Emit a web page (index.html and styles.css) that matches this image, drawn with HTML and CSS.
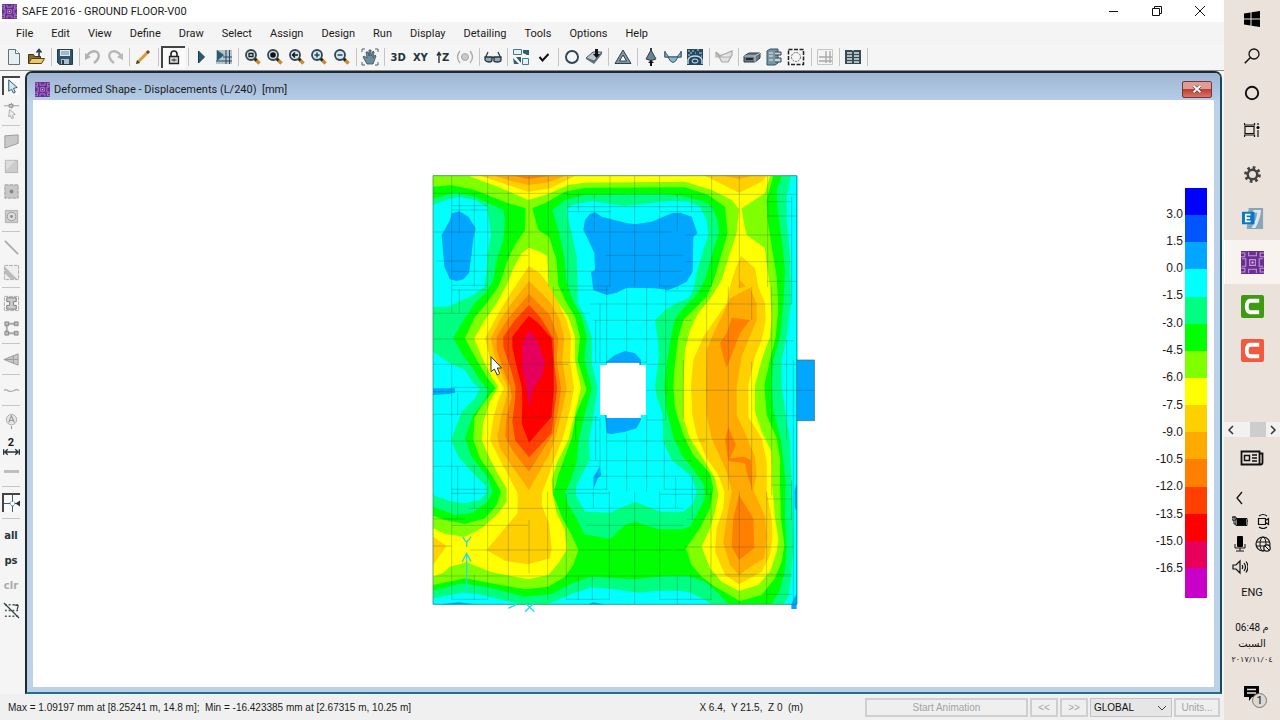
FILE: index.html
```html
<!DOCTYPE html>
<html lang="en">
<head>
<meta charset="utf-8">
<title>SAFE 2016 - GROUND FLOOR-V00</title>
<link rel="stylesheet" href="styles.css">
</head>
<body>
<svg class="defs" aria-hidden="true">
  <symbol id="safe" viewBox="0 0 24 24"><rect width="24" height="24" fill="#6a2e91"/><path d="M0 2h4v4H0M8 1v4h8V1M24 2h-4v4h4M1 8h4v8H1M9 9h6v6H9zM23 8h-4v8h4M0 22h4v-4H0M8 23v-4h8v4M24 22h-4v-4h4" fill="none" stroke="#c398dc" stroke-width="1.100"/><path d="M11 11h2v2h-2z" fill="#e6d0f4"/></symbol>
  <symbol id="lens" viewBox="0 0 18 18"><path d="M10.500 10.500l5 5" stroke="#c98a2c" stroke-width="3.400"/><path d="M10 10l2.500 2.500" stroke="#222" stroke-width="2.600"/><circle cx="7" cy="7" r="5" fill="#d3e4ec" stroke="#34464f" stroke-width="1.800"/></symbol>
</svg>
<div class="desktop">
<div class="app">
  <header class="titlebar">
    <svg class="logo" viewBox="0 0 24 24"><use href="#safe"/></svg>
    <h1 class="title">SAFE 2016 - GROUND FLOOR-V00</h1>
    <div class="winbtns">
      <button aria-label="Minimize"><svg viewBox="0 0 12 12"><path d="M1 6.500h9" stroke="#111"/></svg></button>
      <button aria-label="Restore"><svg viewBox="0 0 12 12"><path d="M1.500 3.500h7v7h-7zM3.500 3.500v-2h7v7h-2" fill="none" stroke="#111"/></svg></button>
      <button aria-label="Close"><svg viewBox="0 0 12 12"><path d="M1 1l10 10M11 1L1 11" stroke="#111"/></svg></button>
    </div>
  </header>
  <nav class="menu" aria-label="Main menu">
    <button>File</button><button>Edit</button><button>View</button><button>Define</button><button>Draw</button><button>Select</button><button>Assign</button><button>Design</button><button>Run</button><button>Display</button><button>Detailing</button><button>Tools</button><button>Options</button><button>Help</button>
  </nav>
  <div class="toolbar" role="toolbar" aria-label="Main tools">
    <button aria-label="New"><svg viewBox="0 0 18 18"><path d="M3.500 1.500h7l4 4v11h-11z" fill="#e6eff1" stroke="#62737a"/><path d="M10.500 1.500v4h4" fill="#fff" stroke="#62737a"/></svg></button>
    <button aria-label="Open"><svg viewBox="0 0 18 18"><path d="M1.500 15.500v-9h5l1 2h6v7z" fill="#8a6a24" stroke="#43351a"/><path d="M1.500 15.500l3-5h13l-3 5z" fill="#f1c869" stroke="#5a4319"/><path d="M12 9V3M9.500 4.500L12 1.500l2.500 3" fill="none" stroke="#263b49" stroke-width="1.600"/></svg></button>
    <i class="sep"></i>
    <button aria-label="Save"><svg viewBox="0 0 18 18"><path d="M1.500 1.500h15v15h-13l-2-2z" fill="#31546b" stroke="#263d4b"/><path d="M4 2h10v6H4z" fill="#dce8ee"/><path d="M5 4h8M5 6h8" stroke="#6a8798"/><path d="M5 11h8v5H5z" fill="#a8c1cd"/><path d="M6 12h2v4H6z" fill="#263d4b"/></svg></button>
    <i class="sep"></i>
    <button disabled aria-label="Undo"><svg viewBox="0 0 18 18"><path d="M3 8c3-5 8-6 11-3 2 4 0 7-4 10" fill="none" stroke="#b2b2b2" stroke-width="2.400"/><path d="M1 5v7l6-3z" fill="#b2b2b2"/></svg></button>
    <button disabled aria-label="Redo"><svg viewBox="0 0 18 18"><path d="M15 8C12 3 7 2 4 5c-2 4 0 7 4 10" fill="none" stroke="#b8b8b8" stroke-width="2.400"/><path d="M17 5v7l-6-3z" fill="#b8b8b8"/></svg></button>
    <i class="sep"></i>
    <button aria-label="Edit"><svg viewBox="0 0 18 18"><path d="M4 14L14 4" stroke="#d79a35" stroke-width="3"/><path d="M13 5l2-2" stroke="#8a3c22" stroke-width="3"/><path d="M2 16l1-4 3 3z" fill="#40331e"/></svg></button>
    <i class="sep"></i>
    <button class="pressed" aria-label="Lock"><svg viewBox="0 0 18 18"><path d="M6 8V5a3 3 0 016 0V8" fill="none" stroke="#222" stroke-width="1.600"/><path d="M4.500 7.500h9v7h-9z" fill="#d5d9dd" stroke="#222" stroke-width="1.300"/><path d="M9 9.500v3M6.500 11h5" stroke="#333"/></svg></button>
    <i class="sep"></i>
    <button aria-label="Run"><svg viewBox="0 0 18 18"><path d="M5.500 3l6 6-6 6z" fill="#285c76" stroke="#183d50"/></svg></button>
    <button aria-label="Run with mesh"><svg viewBox="0 0 18 18"><path d="M1 2h16v14H1z" fill="#b5c4cc"/><path d="M11 2v14M14.500 2v14M1 13h16M8 9h9" stroke="#2d4b5c"/><path d="M2 2l7 5-7 6z" fill="#285c76"/></svg></button>
    <i class="sep"></i>
    <button aria-label="Zoom window"><svg viewBox="0 0 18 18"><use href="#lens"/><path d="M5 5.500h4v3H5z" fill="none" stroke="#222" stroke-width="1.300"/></svg></button>
    <button aria-label="Zoom full"><svg viewBox="0 0 18 18"><use href="#lens"/><circle cx="7" cy="7" r="2.800" fill="#111"/></svg></button>
    <button aria-label="Zoom previous"><svg viewBox="0 0 18 18"><use href="#lens"/><path d="M10 7H5M7 4.500L4.500 7 7 9.500" fill="none" stroke="#111" stroke-width="1.400"/></svg></button>
    <button aria-label="Zoom in"><svg viewBox="0 0 18 18"><use href="#lens"/><path d="M4.500 7h5M7 4.500v5" stroke="#194b66" stroke-width="1.500"/></svg></button>
    <button aria-label="Zoom out"><svg viewBox="0 0 18 18"><use href="#lens"/><path d="M4.500 7h5" stroke="#194b66" stroke-width="1.500"/></svg></button>
    <i class="sep"></i>
    <button aria-label="Pan"><svg viewBox="0 0 18 18"><path d="M1 4V1h3M14 1h3v3M1 14v3h3M14 17h3v-3" fill="none" stroke="#44616f"/><path d="M6 16L2 9l1-1 3 2-1-6h2l1 4V2h2v6l2-5 1 1-1 6 2-3 1 1-3 8z" fill="#6f8c9b" stroke="#38515f" stroke-width=".8"/></svg></button>
    <i class="sep"></i>
    <button class="letters">3D</button>
    <button class="letters">XY</button>
    <button class="letters" aria-label="Elevation Z"><svg class="up" viewBox="0 0 6 12"><path d="M3 12V2M1 4.500L3 1.500l2 3" fill="none" stroke="#26343d" stroke-width="1.400"/></svg>Z</button>
    <button disabled aria-label="Rotate"><svg viewBox="0 0 18 18"><circle cx="9" cy="9" r="3.500" fill="#c9c9c9" stroke="#aaa"/><path d="M4 3q-5 6 0 12M14 3q5 6 0 12" fill="none" stroke="#aaa" stroke-width="1.300"/></svg></button>
    <i class="sep"></i>
    <button aria-label="Object options"><svg viewBox="0 0 18 18"><path d="M1.500 9.500L4 4M16.500 9.500L14 4M8 10q1-1 2 0" fill="none" stroke="#2e3e48" stroke-width="1.300"/><path d="M1 9h7v3q0 2-3 2t-4-2zM10 9h7v3q0 2-4 2t-3-2z" fill="#93a9b2" stroke="#26343d" stroke-width="1.300"/></svg></button>
    <i class="sep"></i>
    <button aria-label="Assign to shape"><svg viewBox="0 0 18 18"><path d="M1.500 1.500h8v5h-8zM10.500 10.500h6v6h-6z" fill="#e4f0f7" stroke="#4b7690"/><path d="M11 2h6v5h-2L11 5zM1 10l6 6H2zM4 9l5 6V9z" fill="#315b76"/></svg></button>
    <button aria-label="Accept"><svg viewBox="0 0 18 18"><path d="M4.500 9l3 3.500L13.500 6" fill="none" stroke="#111" stroke-width="2"/></svg></button>
    <i class="sep"></i>
    <button aria-label="Undeformed shape"><svg viewBox="0 0 18 18"><circle cx="9" cy="9" r="6" fill="#f2f7fa" stroke="#304452" stroke-width="1.900"/></svg></button>
    <button aria-label="Show loads"><svg viewBox="0 0 18 18"><path d="M1 10l7-6h9l-8 9z" fill="#b9c8d0" stroke="#4c5b64"/><path d="M1 10l8 3 8-9v2l-8 10-8-5z" fill="#61717a"/><path d="M10 1h3v5h2l-3.500 4L8 6h2z" fill="#111"/></svg></button>
    <i class="sep"></i>
    <button aria-label="Deformed shape"><svg viewBox="0 0 18 18"><path d="M9 2l8 13.500H1z" fill="#8097a3" stroke="#30414b"/><path d="M9 7l3.500 6h-7z" fill="#fff" stroke="#30414b"/></svg></button>
    <i class="sep"></i>
    <button aria-label="Reactions"><svg viewBox="0 0 18 18"><path d="M9 0v12" stroke="#30414b" stroke-width="2"/><path d="M9 2l5 9q-5 3-10 0z" fill="#648694" stroke="#30414b"/><path d="M9 12l3 3h-2v3H8v-3H6z" fill="#111"/></svg></button>
    <button aria-label="Beam forces"><svg viewBox="0 0 18 18"><path d="M1 3v6h16V3" fill="none" stroke="#2d4858" stroke-width="1.200"/><path d="M1 4l4 5H1zM17 4l-4 5h4zM4 9h10q-5 11-10 0z" fill="#8fb4c6" stroke="#315b76"/></svg></button>
    <button aria-label="Slab forces"><svg viewBox="0 0 18 18"><path d="M1 1h16v16H1z" fill="#24485f"/><path d="M2 16V12q1-4 7-4t7 4v4" fill="none" stroke="#c4dbe8" stroke-width="1.400"/><ellipse cx="9" cy="13" rx="3" ry="2" fill="none" stroke="#d8e8f0"/><path d="M2 3h2M6 3h2M11 2h2M4 5h2M13 5h3M2 7h2M9 5h1M15 8h1" stroke="#c4dbe8"/></svg></button>
    <i class="sep"></i>
    <button disabled aria-label="Strip forces"><svg viewBox="0 0 18 18"><path d="M1 4l4 4 12-5v4l-4 7H7zM1 4v5h15" fill="#e2e2e2" stroke="#aaa" stroke-width="1.200"/></svg></button>
    <i class="sep"></i>
    <button aria-label="Beam design"><svg viewBox="0 0 18 18"><path d="M1 8l5-3h11v5l-5 4H1z" fill="#68777f" stroke="#2e3c44"/><path d="M1 8h11l5-3M12 8v6" fill="none" stroke="#c5d0d5"/><path d="M3 11h7" stroke="#202a31" stroke-width="2"/></svg></button>
    <button aria-label="Slab design"><svg viewBox="0 0 18 18"><path d="M2 3l3-2h8v14l-3 2H2z" fill="#7995a4" stroke="#385362"/><path d="M10 4h6v3h-6M10 10h6v4h-6" fill="#c5d5dd" stroke="#30414b"/><path d="M4 5h4M4 8h4M4 12h4" stroke="#e4edf0"/></svg></button>
    <button aria-label="Punching shear"><svg viewBox="0 0 18 18"><path d="M1.500 1.500h15v15h-15z" fill="none" stroke="#222" stroke-width="1.500" stroke-dasharray="4 1.500"/><circle cx="9" cy="9" r="4.500" fill="none" stroke="#666" stroke-dasharray="2 1"/></svg></button>
    <i class="sep"></i>
    <button disabled aria-label="Drawing"><svg viewBox="0 0 18 18"><path d="M1.500 1.500h15v15h-15z" fill="#f3f3f3" stroke="#c5c5c5"/><path d="M10 3v12M14 3v12M3 9h13M3 13h13" stroke="#aaa" stroke-width="1.400"/></svg></button>
    <i class="sep"></i>
    <button aria-label="Tables"><svg viewBox="0 0 18 18"><path d="M1 2h7l1 1 1-1h7v14H1z" fill="#384a54"/><path d="M3 5h5M3 8h5M3 11h5M3 14h5M10 5h5M10 8h5M10 11h5M10 14h5" stroke="#d8e4e5" stroke-width="1.400"/></svg></button>
    <i class="sep"></i>
  </div>
  <div class="work">
    <div class="side" role="toolbar" aria-label="Drawing tools">
      <button class="pressed" aria-label="Pointer"><svg viewBox="0 0 18 18"><path d="M5 2l9 8-4 1 2 4-2 1-2-4-3 2z" fill="#d4e6ef" stroke="#2d536b"/></svg></button>
      <button aria-label="Reshape"><svg viewBox="0 0 18 18"><path d="M1 4h16M9 1v6" stroke="#999"/><path d="M6.500 2.500h4v3h-4z" fill="#ccc" stroke="#888"/><path d="M7 8l6 5-3 1 1 3-2 .5-1-3-2 1z" fill="#eee" stroke="#aaa"/></svg></button>
      <i class="rule"></i>
      <button aria-label="Draw slab"><svg viewBox="0 0 18 18"><path d="M2 3l14-1v9L2 16z" fill="#c9c9c9" stroke="#999"/></svg></button>
      <button aria-label="Draw rectangle"><svg viewBox="0 0 18 18"><path d="M2.500 2.500h13v13h-13z" fill="#ccc" stroke="#b0b0b0"/><path d="M3 13L13 3H3z" fill="#ddd"/></svg></button>
      <button aria-label="Quick draw"><svg viewBox="0 0 18 18"><path d="M2 2h14v14H2z" fill="#c8c8c8" stroke="#999" stroke-dasharray="4 1"/><circle cx="9" cy="9" r="2" fill="#858585"/></svg></button>
      <button aria-label="Draw around point"><svg viewBox="0 0 18 18"><path d="M2.500 2.500h13v13h-13z" fill="#ccc" stroke="#b0b0b0"/><circle cx="9" cy="9" r="4.500" fill="#ddd" stroke="#999"/><circle cx="9" cy="9" r="1.500" fill="#888"/></svg></button>
      <i class="rule"></i>
      <button aria-label="Draw line"><svg viewBox="0 0 18 18"><path d="M2 2l14 14" stroke="#aaa" stroke-width="1.800"/></svg></button>
      <button aria-label="Quick line"><svg viewBox="0 0 18 18"><path d="M1.500 1.500h15v15h-15z" fill="#eee" stroke="#aaa" stroke-dasharray="4 1"/><path d="M2 3l13 13H8L2 10z" fill="#bbb"/></svg></button>
      <i class="rule"></i>
      <button aria-label="Draw column"><svg viewBox="0 0 18 18"><path d="M1.500 1.500h15v15h-15z" fill="none" stroke="#aaa" stroke-dasharray="4 1"/><path d="M4 3h10v4h-3v4h3v4H4v-4h3V7H4z" fill="#ccc" stroke="#777"/></svg></button>
      <button aria-label="Draw wall"><svg viewBox="0 0 18 18"><path d="M4 4h10M4 14h10M4 4v10" stroke="#aaa" stroke-width="2"/><path d="M2 2h4v4H2zM12 2h4v4h-4zM2 12h4v4H2zM12 12h4v4h-4z" fill="#bbb" stroke="#888"/></svg></button>
      <i class="rule"></i>
      <button aria-label="Draw ramp"><svg viewBox="0 0 18 18"><path d="M1 9l15-6v12zM1 9h15M11 5v8" fill="#c8c8c8" stroke="#999"/></svg></button>
      <i class="rule"></i>
      <button aria-label="Draw tendon"><svg viewBox="0 0 18 18"><path d="M1 9q2-2 4 0t7 0q2-2 5 0" fill="none" stroke="#aaa" stroke-width="1.300"/></svg></button>
      <i class="rule"></i>
      <button aria-label="Draw grid"><svg viewBox="0 0 18 18"><circle cx="9" cy="7" r="5.500" fill="#e4e4e4" stroke="#aaa"/><path d="M6 10l3-7 3 7M7 8h4M9 14v3" fill="none" stroke="#999" stroke-width="1.200"/></svg></button>
      <button class="dim" aria-label="Dimension"><span>2</span><svg viewBox="0 0 18 8"><path d="M.7 1v6M17.300 1v6M2 4h14M5 1L2 4l3 3M13 1l3 3-3 3" fill="none" stroke="#26343d" stroke-width="1.400"/></svg></button>
      <button aria-label="Strip"><svg viewBox="0 0 18 18"><path d="M1 9h16" stroke="#bbb" stroke-width="3"/></svg></button>
      <i class="rule"></i>
      <button class="pressed" aria-label="Snap"><svg viewBox="0 0 18 18"><path d="M9 0v18M0 9h13" stroke="#31546b"/><circle cx="9" cy="9" r="2.500" fill="#fff" stroke="#31546b" stroke-dasharray="1 1"/><path d="M12 9l6-4v8z" fill="#26343d"/></svg></button>
      <i class="rule wide"></i>
      <button class="letters">all</button>
      <button class="letters">ps</button>
      <button class="letters" disabled>clr</button>
      <button aria-label="Select by line"><svg viewBox="0 0 18 18"><path d="M2 3h14M2 9h14M2 15h14" stroke="#555" stroke-width="1.600" stroke-dasharray="2 2"/><path d="M1 1l16 16M12 3l4 1-1 4" fill="none" stroke="#31434d" stroke-width="1.300"/></svg></button>
    </div>
    <section class="window" aria-label="Deformed Shape">
      <div class="wintitle">
        <svg class="logo" viewBox="0 0 24 24"><use href="#safe"/></svg>
        <h2 class="title">Deformed Shape - Displacements (L/240)&nbsp; [mm]</h2>
        <button class="close" aria-label="Close view"><svg viewBox="0 0 10 8"><path d="M1.500 .8l7 6.400M8.500 .8l-7 6.400" stroke="#5b3030" stroke-width="3"/><path d="M1.500 .8l7 6.400M8.500 .8l-7 6.400" stroke="#fff" stroke-width="1.900"/></svg></button>
      </div>
      <div class="canvas">
        <svg class="plot" viewBox="0 0 1170 1350" role="img" aria-label="Slab displacement contours">
          <path fill="#00ff00" d="M24 17H1115V1303H24z"/>
          <g fill="#00ff80">
            <path d="M24 86L90 68 150 80 190 100 235 120 240 150 235 210 215 270 205 330 185 365 150 400 130 430 110 460 85 505 110 550 140 590 165 630 190 660 180 690 145 735 120 805 140 860 190 925 202 965 188 995 140 1030 90 1035 24 1010z"/>
            <path d="M382 120L420 90 480 75 700 72 770 78 840 95 860 110 878 150 882 190 862 250 840 330 815 375 780 410 755 440 745 465 735 520 725 580 718 645 725 720 745 800 770 855 810 905 838 945 840 985 820 1025 795 1070 770 1078 700 1078 630 1055 600 1065 555 1107 478 1093 455 1045 430 1005 420 970 440 925 455 875 462 805 480 730 500 655 478 570 485 500 470 440 445 395 425 340 418 260 400 180z"/>
            <path d="M1070 17L1055 60 1058 120 1068 190 1080 300 1075 400 1065 500 1045 570 1040 645 1045 720 1068 810 1082 940 1080 1040 1085 1130 1080 1200 1065 1260 1040 1303H1115V17z"/>
            <path d="M24 1262L110 1240 200 1255 300 1280 380 1272 440 1240 500 1220 630 1228 720 1218 790 1218 840 1235 880 1270 910 1303H24z"/>
          </g>
          <g fill="#00ffff">
            <path d="M24 105L60 90 100 80 150 90 185 110 192 150 198 195 188 250 185 300 178 350 140 378 100 395 75 409 24 412z"/>
            <path d="M24 545L75 580 120 600 145 640 165 655 150 685 110 725 78 810 100 860 140 905 180 945 185 970 165 990 120 1000 80 995 24 975z"/>
            <path d="M425 120L440 105 500 93 600 108 670 100 740 92 790 95 825 110 845 150 850 195 835 240 815 310 805 360 790 385 750 402 720 420 690 450 700 520 700 580 690 645 695 680 712 730 715 815 740 870 800 920 815 965 805 1000 775 1025 705 1025 630 995 555 1028 480 1025 452 975 455 945 475 905 495 870 492 810 505 740 518 655 500 580 500 500 480 440 458 400 458 350 455 260 440 190z"/>
            <path d="M1098 17L1085 80 1085 150 1095 250 1098 400 1085 500 1070 570 1070 645 1080 720 1095 810 1100 950 1105 1130 1098 1220 1090 1280 1075 1303H1118V17z"/>
            <path d="M24 1285L110 1268 160 1272 230 1290 290 1303H24zM370 1303L440 1272 500 1252 570 1258 640 1268 700 1262 770 1262 800 1270 840 1290 860 1303z"/>
          </g>
          <g fill="#00a6ff">
            <path d="M80 130L103 124 130 140 152 175 145 205 140 250 132 310 115 328 95 333 75 328 58 290 50 195 75 150z"/>
            <path d="M24 655H90V668L70 672 24 675z"/>
            <path d="M475 180L480 150 495 132 510 127 530 140 600 158 630 163 680 155 740 130 765 128 800 140 817 190 805 200 803 305 785 335 755 350 730 360 690 355 605 353 575 368 545 375 505 360 498 305 510 300 508 250 490 210z"/>
            <path d="M543 585V575L570 555 600 543 630 550 648 570V585zM540 735L545 790 560 792 600 785 635 775 648 750V735zM505 920L515 905 523 892 530 915 518 925 505 960z"/>
            <path d="M1115 940L1109 960V1010L1115 1025zM1099 1303L1115 1270V1317H1099zM50 1303L100 1297 150 1303zM490 1303L505 1297 535 1303z"/>
            <path d="M1115 570H1169V752H1115z"/>
          </g>
          <path fill="#80ff00" d="M24 17V50L80 46 150 60 200 80 250 100 302 115 300 180 270 225 250 265 235 310 220 350 185 400 150 440 120 505 150 560 185 620 212 655 200 668 165 715 148 745 145 810 165 865 200 915 228 965 215 1005 180 1045 120 1062 60 1050 24 1037V1245L120 1225 200 1240 300 1258 370 1250 420 1220 445 1185 460 1140 440 1095 410 1040 385 975 400 915 440 805 455 725 485 660 458 570 465 500 450 440 420 390 400 345 395 270 372 200 340 180 322 115 360 100 420 65 480 53 780 52 850 75 900 110 908 190 890 250 870 320 845 380 805 420 775 450 760 500 750 580 745 650 750 715 775 795 805 855 855 910 865 955 855 1015 825 1075 783 1135 800 1185 830 1220 870 1250 945 1293 1010 1275 1050 1225 1070 1175 1078 1125 1068 1045 1065 945 1065 865 1055 805 1025 735 1018 645 1035 570 1052 500 1060 420 1055 320 1040 230 1028 150 1025 90 1045 17z"/>
          <g fill="#ffff00">
            <path d="M130 17L230 55 310 90 370 72 430 45 480 38 780 35 860 60 920 90 942 118 935 190 915 250 890 330 860 380 820 430 795 480 780 540 775 650 775 745 795 805 840 875 870 925 880 975 870 1025 855 1075 830 1130 855 1195 890 1235 942 1263 1000 1245 1035 1205 1055 1145 1060 1105 1050 1045 1042 945 1040 845 1010 785 990 725 990 645 1010 570 1035 500 1040 440 1035 350 1025 280 1020 235 965 195 955 150 950 115 1020 70 1035 17z"/>
            <path d="M312 233L345 245 367 258 372 350 400 400 430 440 450 500 450 570 468 655 450 730 430 810 395 880 380 930 382 965 395 1030 420 1080 425 1140 400 1180 370 1215 310 1228 200 1207 125 1177 75 1190 55 1208 24 1220V1075L60 1092 120 1100 170 1075 220 1030 245 995 245 955 215 905 185 845 170 810 175 755 195 695 220 650 200 620 170 560 148 505 180 450 215 400 245 345 265 295 290 250z"/>
          </g>
          <g fill="#ffd000">
            <path d="M165 17L240 42 310 65 375 55 430 28 450 17zM840 17L942 68 1010 35 1025 17zM24 1100L65 1128 24 1185z"/>
            <path d="M312 288L345 310 375 350 400 400 425 450 438 500 435 570 447 655 435 720 415 800 385 875 370 920 352 965 350 1005 372 1060 380 1135 375 1165 310 1183 240 1172 185 1140 235 1080 278 1030V970L260 935 225 870 195 810 205 745 220 690 237 655 215 620 195 565 180 505 220 430 260 365 290 320z"/>
            <path d="M948 258L990 295 1000 350 1020 400 1022 450 1010 510 990 560 970 645 970 740 1010 805 1025 875 1025 965 1040 1045 1042 1105 1035 1155 1010 1205 942 1243 900 1215 870 1145 875 1075 895 1015 898 965 880 915 845 865 815 795 802 735 798 645 805 570 835 500 870 450 905 400 915 350 930 300z"/>
          </g>
          <g fill="#ffaa00">
            <path d="M210 17L260 34 310 45 370 37 420 17zM895 17L942 27 985 17z"/>
            <path d="M312 333L375 395 405 450 418 505 412 570 425 655 412 720 395 790 375 850 312 960 265 895 225 835 217 800 228 740 245 680 248 655 230 610 210 560 197 505 225 450 260 400z"/>
            <path d="M915 385L975 353 995 400 995 450 970 510 950 560 935 650 935 735 965 800 990 860 995 915 985 960 1020 1040 1025 1100 1018 1165 970 1195 942 1215 915 1185 895 1120 905 1045 920 965 905 905 880 850 860 805 845 735 843 645 845 540 870 480 895 430zM945 330L962 350 943 355z"/>
          </g>
          <g fill="#ff8000">
            <path d="M265 17L310 28 375 17z"/>
            <path d="M312 372L375 435 400 505 395 575 408 655 400 720 385 790 312 905 265 845 240 800 245 740 260 680 255 650 235 600 215 540 215 500 250 445z"/>
            <path d="M920 443L975 450 945 490 918 560 905 593 895 560 885 520 905 490zM910 770L933 825 915 865 955 860 978 870 980 955 965 905 960 880 910 873 900 810zM942 975L985 1045 988 1135 942 1170 920 1130 925 1045z"/>
          </g>
          <path fill="#ff4000" d="M312 405L345 440 385 505 387 575 397 655 385 740 380 790 312 862 270 810 262 755 270 690 272 650 255 590 235 530 235 500 270 450z"/>
          <path fill="#ff0000" d="M312 437L340 460 380 505 385 575 386 655 380 740 345 780 312 818 290 760 292 690 290 650 275 590 262 530 262 500 285 470z"/>
          <path fill="#e6005c" d="M312 480L335 510 360 575 350 620 325 655 312 715 305 655 292 600 292 520z"/>
          <path fill="#fff" d="M525 585H545V578H643V585H663V735H648V744H545V735H525z"/>
          <path class="mesh" d="M80 17V430M80 580V1290M103 70V190M103 360V430M98 890V1045M98 670V735M148 70V350M148 885V1015M148 1215V1290M188 17V1290M250 17V1290M312 17V400M312 1050V1210M370 17V350M385 350V975M368 965V1290M428 17V350M424 970V1290M460 70V125M460 1220V1290M452 740V810M508 75V185M505 965V1015M502 1220V1290M555 17V350M553 965V1290M545 350V580M545 745V960M525 400V578M512 450V580M512 740V870M525 742V900M629 17V350M605 350V545M605 790V965M629 965V1303M665 350V580M665 735V965M704 17V350M704 965V1290M722 350V750M718 815V960M757 70V185M752 920V1015M757 350V360M757 1220V1303M800 75V125M802 920V1045M797 1213V1290M860 17V350M845 380V975M858 965V1290M775 570V745M943 17V355M910 350V960M943 965V1303M980 350V450M980 575V960M1028 17V350M1025 965V1303M1040 350V975M1100 80V402M1085 510V810M1105 570V1303M1100 930V1050"/>
          <path class="mesh" d="M24 70H310M310 70H425M425 73H1115M80 107H188M80 120H188M428 110H860M428 125H557M705 125H860M1025 95H1100M1025 138H1115M24 186H575M570 186H740M780 195H1100M135 256H310M540 256H775M35 273H140M780 275H1100M80 304H770M80 346H188M428 348H557M700 348H860M1025 334H1115M80 360H188M385 360H550M722 363H860M1040 375H1100M495 402H1100M24 430H495M505 451H800M24 507H900M775 512H1105M370 577H665M665 583H720M1040 583H1115M24 583H430M80 652H188M24 665H440M665 661H1169M24 733H250M250 742H520M450 750H525M665 750H720M1040 737H1115M24 813H525M545 813H840M775 808H1060M495 872H800M24 889H525M510 919H1100M80 958H188M385 958H545M720 958H860M80 970H188M428 970H555M705 973H860M1025 987H1100M1040 945H1100M130 1015H775M785 1048H1100M24 1047H120M80 1066H310M480 1066H775M24 1128H80M135 1140H780M780 1131H1105M24 1218H1100M860 1213H1100M80 1288H188M424 1288H553M704 1288H860M1025 1273H1100"/>
          <path d="M24 17V1303H1115V17zM1115 570H1169V752H1115" class="edge"/>
          <path class="axis" d="M125 1150V1270M112 1175L125 1150 138 1175M112 1100L125 1117 138 1100M125 1117V1130M300 1325L328 1298M300 1298L328 1325M250 1315L275 1303"/>
          <path d="M198 560V605L208 597 217 615 224 611 217 594H230z" fill="#fff" stroke="#333" stroke-width="3"/>
        </svg>
        <div class="legend">
          <ol class="values"><li>3.0</li><li>1.5</li><li>0.0</li><li>-1.5</li><li>-3.0</li><li>-4.5</li><li>-6.0</li><li>-7.5</li><li>-9.0</li><li>-10.5</li><li>-12.0</li><li>-13.5</li><li>-15.0</li><li>-16.5</li></ol>
          <div class="ramp"><i class="c1"></i><i class="c2"></i><i class="c3"></i><i class="c4"></i><i class="c5"></i><i class="c6"></i><i class="c7"></i><i class="c8"></i><i class="c9"></i><i class="c10"></i><i class="c11"></i><i class="c12"></i><i class="c13"></i><i class="c14"></i><i class="c15"></i></div>
        </div>
      </div>
    </section>
  </div>
  <footer class="status">
    <span class="extents">Max = 1.09197 mm at [8.25241 m, 14.8 m];&nbsp; Min = -16.423385 mm at [2.67315 m, 10.25 m]</span>
    <span class="coords">X 6.4,&nbsp; Y 21.5,&nbsp; Z 0&nbsp; (m)</span>
    <button class="anim" disabled>Start Animation</button>
    <button class="step" disabled>&lt;&lt;</button>
    <button class="step" disabled>&gt;&gt;</button>
    <span class="pick"><select aria-label="Coordinate system"><option>GLOBAL</option></select><svg viewBox="0 0 10 6"><path d="M1 1l4 4 4-4" fill="none" stroke="#444"/></svg></span>
    <button class="units" disabled>Units...</button>
  </footer>
</div>
<aside class="taskbar" aria-label="Taskbar">
  <button class="t37" aria-label="Start"><svg viewBox="0 0 16 16"><path d="M0 2.500L6.500 1.500V7.500H0zM7.500 1.300L16 0V7.500H7.500zM0 8.500H6.500V14.500L0 13.500zM7.500 8.500H16V16L7.500 14.700z"/></svg></button>
  <button class="t37" aria-label="Search"><svg viewBox="0 0 16 16"><circle cx="10" cy="6" r="5" fill="none" stroke="#111" stroke-width="1.300"/><path d="M6.500 9.500L.7 15.300" stroke="#111" stroke-width="1.500"/></svg></button>
  <button class="t37" aria-label="Cortana"><svg viewBox="0 0 16 16"><circle cx="8" cy="8" r="6.200" fill="none" stroke="#111" stroke-width="1.900"/></svg></button>
  <button class="t37" aria-label="Task view"><svg viewBox="0 0 16 16"><path d="M1 4.500h9v7H1zM.5 1v2h10V1M.5 15v-2h10v2M14 1v2M14 8v7" fill="none" stroke="#111" stroke-width="1.200"/><circle cx="14" cy="5.500" r="1.500"/></svg></button>
  <button class="t44 gear" aria-label="Settings"><svg viewBox="0 0 16 16"><circle cx="8" cy="8" r="4.500" fill="none" stroke="#444" stroke-width="2.400"/><circle cx="8" cy="8" r="6.500" fill="none" stroke="#444" stroke-width="2.800" stroke-dasharray="2.500 2.600"/></svg></button>
  <button class="t44 app-icon" aria-label="ETABS"><svg viewBox="0 0 24 24"><path d="M8 1h15v22H6z" fill="#8aa5b5"/><path d="M13 3h8q-1 10-6 19h-4q5-8 6-16h-5z" fill="#dce8ed"/><path d="M1 5h13v13H1z" fill="#0878c8"/><path d="M10 8H5v7h5M5 11.500h4.500" fill="none" stroke="#fff" stroke-width="1.800"/></svg></button>
  <button class="t44 app-icon current" aria-label="SAFE"><svg viewBox="0 0 24 24"><use href="#safe"/></svg></button>
  <button class="t44 app-icon" aria-label="Camtasia"><svg viewBox="0 0 24 24"><rect width="24" height="24" rx="2" fill="#3d9a12"/><path d="M19 4v4H10q-2 0-2 4t2 4h9v4H9q-5-1-5-8t5-8z" fill="#fff"/></svg></button>
  <button class="t44 app-icon" aria-label="Camtasia Recorder"><svg viewBox="0 0 24 24"><rect width="24" height="24" rx="2" fill="#f4583e"/><path d="M19 4v4H10q-2 0-2 4t2 4h9v4H9q-5-1-5-8t5-8z" fill="#fff"/></svg></button>
  <div class="pager"><button aria-label="Scroll left"><svg viewBox="0 0 8 10"><path d="M6 1L2 5l4 4" fill="none" stroke="#333" stroke-width="1.500"/></svg></button><i></i><button aria-label="Scroll right"><svg viewBox="0 0 8 10"><path d="M2 1l4 4-4 4" fill="none" stroke="#333" stroke-width="1.500"/></svg></button></div>
  <button class="t42 news" aria-label="News"><svg viewBox="0 0 24 18"><path d="M1.500 2.500h18v13h-18zM19.500 4.500h3v9q0 2-2 2h-3" fill="none" stroke="#111" stroke-width="1.800"/><path d="M4.500 6.500h5v5h-5zM12 6h5M12 9h5M12 12h5" fill="none" stroke="#111" stroke-width="1.500"/></svg></button>
  <div class="tray">
    <button aria-label="Show hidden icons"><svg viewBox="0 0 16 16"><path d="M10 2L5 8l5 6" fill="none" stroke="#111" stroke-width="1.300"/></svg></button><span></span>
    <button aria-label="Battery"><svg viewBox="0 0 16 16"><path d="M5 6h9v6H5z"/><path d="M4 5.500h11v7H4zM15 8h1.500v2.500M2 3v3M0 4h4v3H0zM2 7v4h2" fill="none" stroke="#111"/></svg></button>
    <button aria-label="Camera"><svg viewBox="0 0 16 16"><path d="M3.500 5.500h7v6h-7zM10.500 7.500l3-2v6l-3-2M4 3q4-3 8 0M4 14q4 3 8 0" fill="none" stroke="#111" stroke-width="1.200"/></svg></button>
    <button aria-label="Microphone"><svg viewBox="0 0 16 16"><rect x="5" y="0" width="6" height="11" rx="1"/><path d="M3 8v4h10V8M8 12v3M4 15h8" fill="none" stroke="#111"/></svg></button>
    <button aria-label="Network"><svg viewBox="0 0 16 16"><circle cx="8" cy="8" r="7" fill="none" stroke="#111" stroke-width="1.200"/><ellipse cx="8" cy="8" rx="3" ry="7" fill="none" stroke="#111"/><path d="M1 6h14M1 10h9" stroke="#111"/><circle cx="12" cy="12" r="3.200" fill="#ebe2dc" stroke="#111" stroke-width="1.200"/><path d="M10 10l4 4" stroke="#111"/></svg></button>
    <button aria-label="Volume"><svg viewBox="0 0 16 16"><path d="M1 6h3l4-4v12l-4-4H1zM10 6q1.500 2 0 4M12 4q3 4 0 8M14 2.500q4 5 0 11" fill="none" stroke="#111" stroke-width="1.200"/></svg></button>
  </div>
  <button class="lang">ENG</button>
  <div class="clock" dir="rtl" lang="ar"><span>م 06:48</span><span>السبت</span><span class="date">٢٠١٧/١١/٠٤</span></div>
  <button class="note" aria-label="1 notification"><svg viewBox="0 0 18 18"><path d="M1 1h15v11H9l-3 4v-4H1z"/><path d="M4 4.500h9M4 8h9" stroke="#ebe2dc" stroke-width="1.300"/></svg><b>1</b></button>
</aside>
</div>
</body>
</html>
```
FILE: styles.css
```css
* { box-sizing: border-box; }
body { margin: 0; font-family: Roboto, "Open Sans", sans-serif; font-size: 11px; color: #1b1b1b; background: #f0f0f0; }
button { border: 0; padding: 0; background: none; font: inherit; color: inherit; display: flex; align-items: center; justify-content: center; }
svg { display: block; flex: none; }
.defs { position: absolute; width: 0; height: 0; }
.desktop { display: flex; min-height: 100vh; }
.app { flex: 1; min-width: 0; display: flex; flex-direction: column; background: #f5f5f5; }

.titlebar { height: 22px; display: flex; align-items: center; background: #fff; padding-left: 2px; gap: 5px; }
.logo { width: 15px; height: 15px; }
.title { margin: 0; font-size: 11px; font-weight: 400; white-space: nowrap; }
.winbtns { margin-left: auto; display: flex; padding-right: 3px; }
.winbtns button { width: 43px; height: 20px; }
.winbtns svg { width: 12px; height: 12px; }

.menu { display: flex; height: 22px; align-items: center; padding-left: 7px; background: #f4f4f4; }
.menu button { height: 20px; padding: 0 9px; }

.toolbar { height: 26px; width: 867px; margin-left: 3px; display: flex; align-items: center; }
.toolbar button { flex: 1 1 0; min-width: 0; height: 22px; }
.toolbar svg { width: 18px; height: 18px; }
.toolbar .up { width: 6px; height: 12px; }
.toolbar .sep { flex: 0 0 6px; height: 18px; border-left: 1px solid #c4c4c4; margin-left: 3px; margin-right: -3px; }
.letters { font-family: "DejaVu Sans", sans-serif; font-weight: 700; font-size: 10px; color: #26343d; }
.letters:disabled { color: #aaa; }
.pressed { background: #fafafa; border-top: 2px solid #444; border-left: 2px solid #444; }

.work { flex: 1; display: flex; min-height: 0; border-top: 1px solid #8a8a8a; }
.side { width: 25px; padding: 2px 5px 0 2px; display: flex; flex-direction: column; }
.side button { height: 25px; width: 18px; align-self: center; }
.side .pressed { height: 19px; margin: 3px 0; overflow: hidden; }
.side svg { width: 17px; height: 17px; }
.side .rule { height: 1px; margin: 2px 0 3px; background: #c6c6c6; }
.side .wide { margin: 3px 0 4px; }
.side .letters { font-size: 10px; }
.side .dim { flex-direction: column; font-weight: 700; font-size: 11px; line-height: 10px; }
.side .dim svg { height: 8px; }

.window { flex: 1; min-width: 0; display: flex; flex-direction: column; margin-right: 2px; border: 2px solid #1c2a33; border-right-color: #154a60; border-bottom-color: #1f7288; border-radius: 7px 7px 0 0; background: #bcd1e8; padding: 0 6px 5px; }
.wintitle { height: 27px; margin: 0 -6px; padding: 5px 8px 0; display: flex; align-items: center; gap: 4px; background: linear-gradient(#a0b5d1, #b5cde8); border-radius: 5px 5px 0 0; }
.close { margin-left: auto; width: 30px; height: 17px; border: 1px solid #74383a; border-radius: 2px; background: linear-gradient(#de9c94 45%, #bd4035 50%, #d77365); }
.close svg { width: 10px; height: 8px; }
.canvas { flex: 1; display: grid; grid-template-columns: 1fr 390px 1fr; padding-right: 7px; background: #fff; align-items: start; }
.plot { grid-column: 2; width: 390px; height: 450px; margin-top: 70px; }
.mesh { fill: none; stroke: #24452c; stroke-opacity: .38; stroke-width: 2; }
.edge { fill: none; stroke: #3a7a66; stroke-width: 3; stroke-opacity: .7; }
.axis { fill: none; stroke: #25dce0; stroke-width: 4; }
.legend { justify-self: end; display: flex; gap: 2px; height: 410px; margin-top: 88px; font-family: "Liberation Sans", Arial, sans-serif; font-size: 12px; }
.values { list-style: none; margin: 12px 0 16px; padding: 0; display: flex; flex-direction: column; text-align: right; }
.values li { flex: 1; display: flex; align-items: center; justify-content: flex-end; }
.ramp { width: 22px; display: flex; flex-direction: column; }
.ramp i { flex: 1; }
.c1 { background: #0000ff; } .c2 { background: #0055ff; } .c3 { background: #00a6ff; }
.c4 { background: #00ffff; } .c5 { background: #00ff80; } .c6 { background: #00ff00; }
.c7 { background: #80ff00; } .c8 { background: #ffff00; } .c9 { background: #ffd000; }
.c10 { background: #ffaa00; } .c11 { background: #ff8000; } .c12 { background: #ff4000; }
.c13 { background: #ff0000; } .c14 { background: #e6005c; } .c15 { background: #c800c8; }
.ramp .c15 { flex: 0 0 30px; }

.status { height: 26px; display: flex; align-items: center; padding: 0 4px 0 8px; gap: 2px; background: #f0f0f0; font-family: "Liberation Sans", Arial, sans-serif; font-size: 10px; white-space: nowrap; }
.coords { margin-left: auto; margin-right: 60px; }
.status button { height: 19px; border: 2px solid #cfcfcf; background: #efefef; color: #a3a3a3; }
.status .anim { width: 163px; }
.status .step { width: 28px; }
.status .units { width: 46px; }
.pick { position: relative; width: 82px; height: 19px; }
.pick select { appearance: none; width: 100%; height: 100%; padding: 0 3px; border: 1px solid #c4c4c4; border-radius: 0; background: #e6e6e6; font: inherit; color: #111; }
.pick svg { position: absolute; right: 5px; top: 7px; width: 10px; height: 6px; }

.taskbar { width: 56px; display: flex; flex-direction: column; background: #ebe2dc; color: #111; }
.taskbar > button svg { width: 16px; height: 16px; }
.t37 { height: 37px; }
.t44 { height: 44px; }
.t42 { height: 42px; }
.gear { margin-top: 4px; }
.taskbar .gear svg { width: 17px; height: 17px; }
.taskbar .app-icon svg { width: 23px; height: 23px; }
.current { background: #f8f3ef; border-left: 1px solid #fff; }
.pager { margin-top: 50px; height: 15px; display: flex; align-items: stretch; justify-content: space-between; background: #f3f1ef; }
.pager button { width: 14px; }
.pager i { width: 16px; margin-left: auto; background: #cdcdcd; }
.pager svg { width: 8px; height: 10px; }
.taskbar .news svg { width: 24px; height: 18px; }
.tray { display: grid; grid-template-columns: 23px 23px; grid-auto-rows: 23px; padding: 7px 0 0 4px; }
.tray svg { width: 16px; height: 16px; }
.lang { height: 28px; }
.clock { margin-top: 14px; display: flex; flex-direction: column; align-items: center; line-height: 16px; font-family: Roboto, "DejaVu Sans", sans-serif; font-size: 10px; white-space: nowrap; }
.clock .date { font-size: 8px; }
.note { position: relative; height: 36px; margin-top: 8px; }
.taskbar .note svg { width: 18px; height: 18px; }
.note b { position: absolute; left: 28px; top: 17px; width: 15px; height: 15px; border: 1px solid #777; border-radius: 50%; background: #ddd6d1; font-size: 11px; font-weight: 400; line-height: 13px; }
```
